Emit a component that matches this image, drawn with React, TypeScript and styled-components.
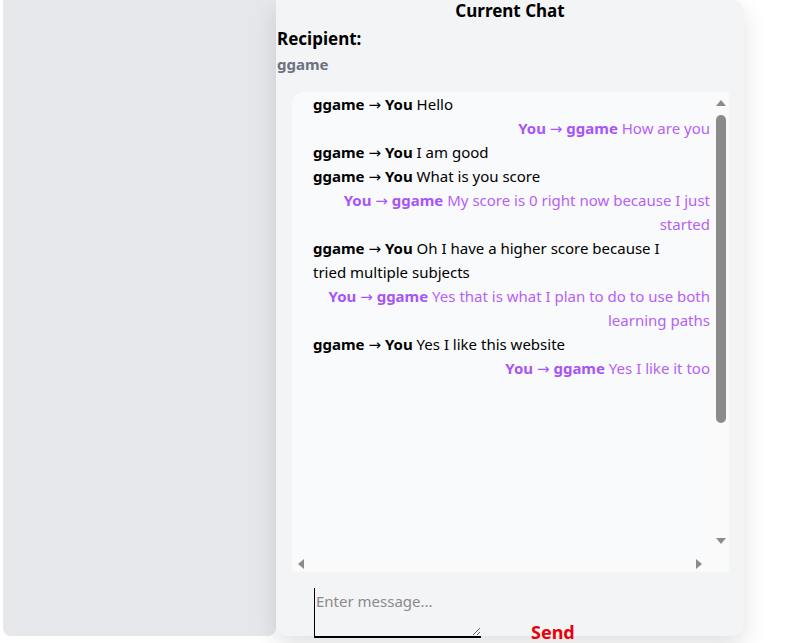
import styled, { createGlobalStyle } from "styled-components";

const GlobalStyle = createGlobalStyle`
    body {
        margin: 0;
        background: #ffffff;
        font-family: "Noto Sans", "Open Sans", sans-serif;
        color: #000;
    }
`;

const Page = styled.div`
    display: flex;
    padding-left: 3px;
    height: 643px;
    overflow: hidden;
`;

const Sidebar = styled.aside`
    width: 273px;
    height: 636px;
    background-color: #e5e7eb;
    border-radius: 0 0 8px 8px;
`;

const ChatPanel = styled.section`
    width: 468px;
    height: 636px;
    background-color: #f3f4f6;
    border-radius: 0 12px 12px 12px;
    box-shadow: 0 10px 25px rgba(0, 0, 0, 0.12);
    display: flex;
    flex-direction: column;
`;

const Title = styled.h2`
    margin: 0;
    font-size: 17px;
    line-height: 22px;
    font-weight: 700;
    text-align: center;
`;

const RecipientLabel = styled.h3`
    margin: 6px 0 0 1px;
    font-size: 17px;
    line-height: 22px;
    font-weight: 700;
`;

const RecipientName = styled.p`
    margin: 4px 0 0 1px;
    font-size: 15px;
    line-height: 20px;
    font-weight: 700;
    color: #6b7280;
`;

const MessageBox = styled.div`
    flex-shrink: 0;
    display: grid;
    grid-template-columns: 1fr 17px;
    grid-template-rows: 463px 17px;
    margin: 18px 15px 0 16px;
    height: 480px;
    background-color: #fafafa;
    border-top-left-radius: 12px;
    overflow: hidden;
`;

const MessageList = styled.div`
    display: flex;
    flex-direction: column;
    overflow: hidden;
    padding-right: 2px;
    background-color: #f9fafb;
    font-size: 15px;
    line-height: 24px;
`;

const Message = styled.div<{ $mine: boolean }>`
    box-sizing: border-box;
    max-width: 400px;
    padding-left: ${(p) => (p.$mine ? "0" : "21px")};
    align-self: ${(p) => (p.$mine ? "flex-end" : "flex-start")};
    text-align: ${(p) => (p.$mine ? "right" : "left")};
    color: ${(p) => (p.$mine ? "#b760f7" : "#000")};

    b {
        color: ${(p) => (p.$mine ? "#a855f7" : "#000")};
    }
`;

const Arrow = styled.span`
    font-family: "DejaVu Sans", sans-serif;
    font-weight: 400;
    font-size: 15px;
    line-height: 1;
`;

const VScroll = styled.div`
    display: flex;
    flex-direction: column;
    align-items: center;
    padding: 8px 0 11px;
    background-color: #fafafa;
`;

const HScroll = styled.div`
    display: flex;
    align-items: center;
    justify-content: space-between;
    padding: 0 10px 0 6px;
    background-color: #fafafa;
`;

const Thumb = styled.div`
    width: 10px;
    height: 308px;
    margin-top: 9px;
    border-radius: 5px;
    background-color: #8b8b8b;
`;

const Tri = styled.div<{ $dir: "up" | "down" | "left" | "right" }>`
    width: 0;
    height: 0;
    border: 5px solid transparent;
    ${(p) =>
        p.$dir === "up"
            ? "border-bottom: 6px solid #8b8b8b; border-top: 0;"
            : p.$dir === "down"
            ? "border-top: 6px solid #8b8b8b; border-bottom: 0; margin-top: auto;"
            : p.$dir === "left"
            ? "border-right: 6px solid #8b8b8b; border-left: 0;"
            : "border-left: 6px solid #8b8b8b; border-right: 0;"}
`;

const Corner = styled.div`
    background-color: #fafafa;
`;

const Composer = styled.div`
    flex-shrink: 0;
    display: flex;
    align-items: flex-end;
    margin-top: 16px;
    padding-left: 38px;
`;

const Input = styled.textarea`
    width: 167px;
    height: 50px;
    box-sizing: border-box;
    border: none;
    border-left: 1px solid #000;
    border-bottom: 2px solid #000;
    background: transparent;
    padding: 3px 0 0 1px;
    font-family: inherit;
    font-size: 15px;
    outline: none;

    &::placeholder {
        color: #8a8a8a;
    }
`;

const SendButton = styled.button`
    margin: 0 0 -6px 50px;
    padding: 0;
    border: none;
    background: none;
    color: #e8000b;
    font-family: inherit;
    font-size: 18px;
    font-weight: 700;
    cursor: pointer;
`;

const messages = [
    { from: "ggame", to: "You", text: "Hello" },
    { from: "You", to: "ggame", text: "How are you" },
    { from: "ggame", to: "You", text: "I am good" },
    { from: "ggame", to: "You", text: "What is you score" },
    { from: "You", to: "ggame", text: "My score is 0 right now because I just started" },
    { from: "ggame", to: "You", text: "Oh I have a higher score because I tried multiple subjects" },
    { from: "You", to: "ggame", text: "Yes that is what I plan to do to use both learning paths" },
    { from: "ggame", to: "You", text: "Yes I like this website" },
    { from: "You", to: "ggame", text: "Yes I like it too" },
];

export default function App() {
    return (
        <>
            <GlobalStyle />
            <Page>
                <Sidebar />
                <ChatPanel>
                    <Title>Current Chat</Title>
                    <RecipientLabel>Recipient:</RecipientLabel>
                    <RecipientName>ggame</RecipientName>
                    <MessageBox>
                        <MessageList>
                            {messages.map((m, i) => (
                                <Message key={i} $mine={m.from === "You"}>
                                    <b>
                                        {m.from} <Arrow>→</Arrow> {m.to}
                                    </b>{" "}
                                    {m.text}
                                </Message>
                            ))}
                        </MessageList>
                        <VScroll>
                            <Tri $dir="up" />
                            <Thumb />
                            <Tri $dir="down" />
                        </VScroll>
                        <HScroll>
                            <Tri $dir="left" />
                            <Tri $dir="right" />
                        </HScroll>
                        <Corner />
                    </MessageBox>
                    <Composer>
                        <Input placeholder="Enter message..." />
                        <SendButton>Send</SendButton>
                    </Composer>
                </ChatPanel>
            </Page>
        </>
    );
}
